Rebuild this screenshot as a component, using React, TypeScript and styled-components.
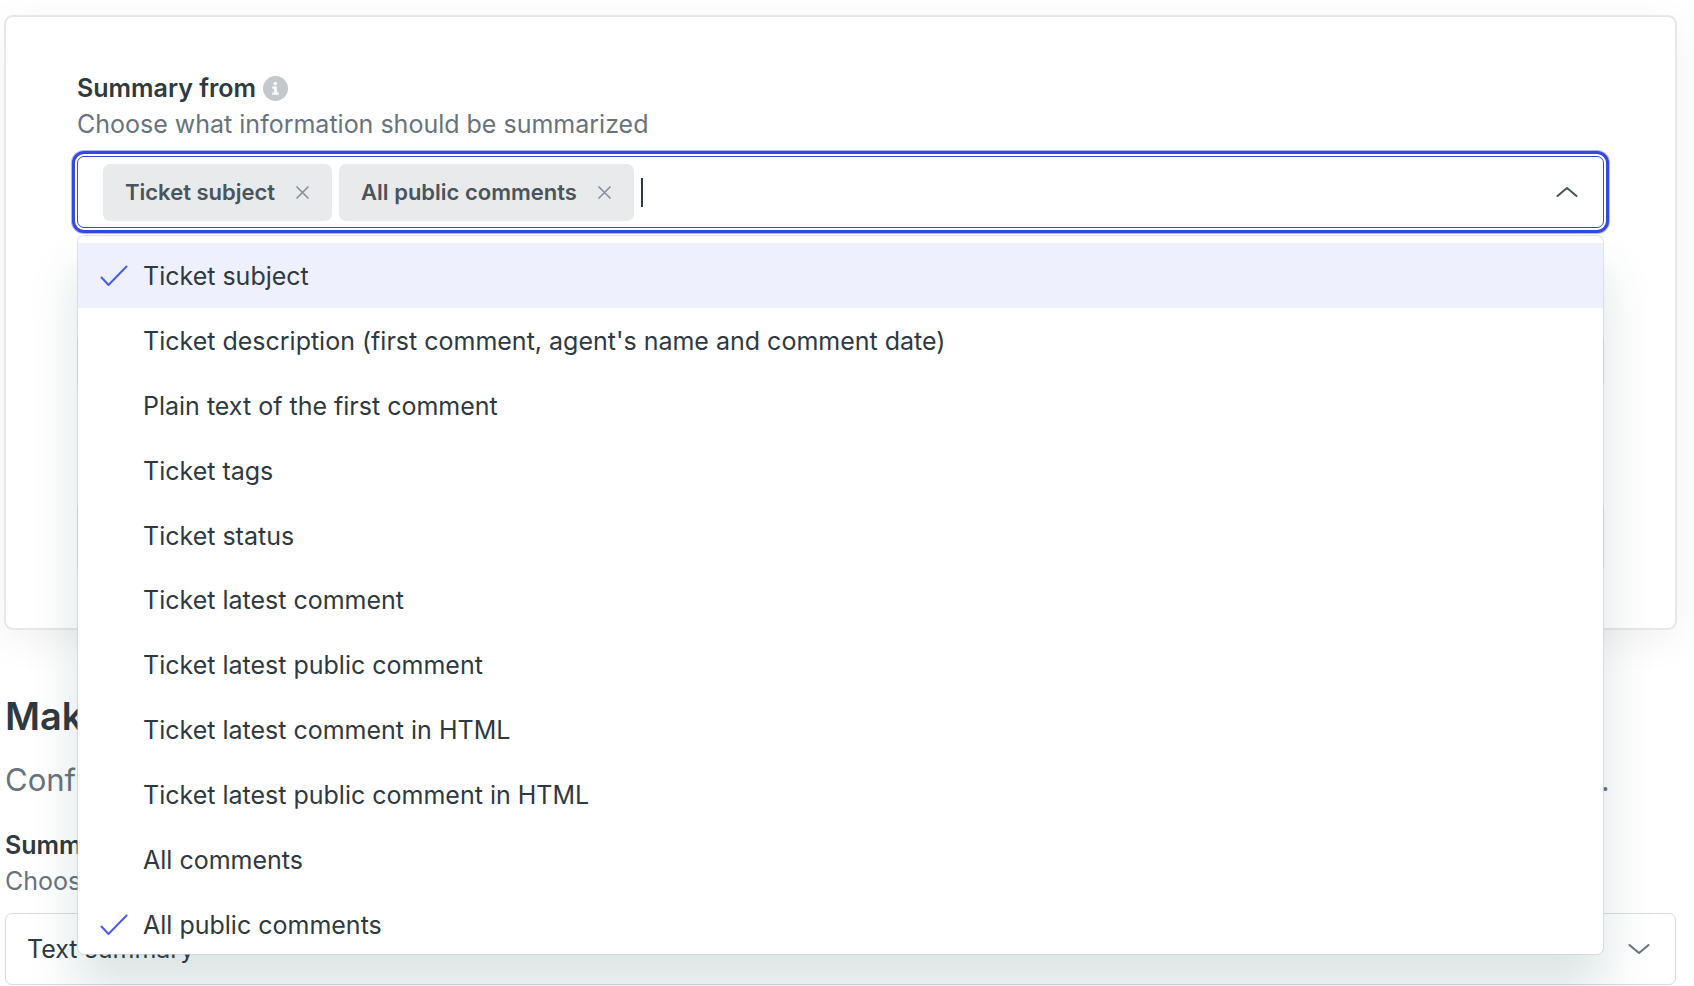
import React, { useState } from "react";
import styled, { createGlobalStyle } from "styled-components";

const GlobalStyle = createGlobalStyle`
  * { box-sizing: border-box; }
  html { overflow-x: hidden; }
  body {
    margin: 0;
    background: #fff;
    color: #2f3941;
    font-family: Inter, "Liberation Sans", sans-serif;
    font-size: 25px;
    line-height: 36px;
  }
  h2, p { margin: 0; }
  input, select, button { font: inherit; color: inherit; }
`;

const Page = styled.main`
  height: 100vh;
  overflow: hidden;
  padding: 15px 17px 0 4px;
`;

const Card = styled.section`
  padding: 53px 71px 55px;
  border: 2px solid #e6e7e7;
  border-radius: 9px;
  background: #fff;
  box-shadow: 0 10px 40px rgba(0, 0, 0, 0.06);
`;

const Field = styled.div<{ $gap?: number }>`
  position: relative;
  display: flex;
  flex-direction: column;
  margin-top: ${(p) => p.$gap ?? 0}px;
`;

const LabelRow = styled.div`
  display: flex;
  align-items: center;
  gap: 7px;
`;

const Label = styled.label`
  font-weight: 600;
`;

const InfoButton = styled.button`
  display: flex;
  padding: 0;
  border: 0;
  background: none;
`;

const Hint = styled.p`
  color: #68737d;
`;

const Combobox = styled.div`
  display: flex;
  align-items: center;
  height: 72px;
  margin-top: 14px;
  padding: 0 25px;
  border: 1px solid #3549e0;
  border-radius: 7px;
  background: #fff;
  box-shadow: 0 0 0 2px #fff, 0 0 0 5px #3549e0, 0 0 0 6px rgba(53, 73, 224, 0.4);
`;

const Chip = styled.span`
  display: flex;
  align-items: center;
  gap: 21px;
  height: 57px;
  margin-right: 7px;
  padding: 0 23px 0 22px;
  border-radius: 7px;
  background: #e9eaeb;
  color: #49545c;
  font-size: 22px;
  font-weight: 600;
`;

const ChipRemove = styled.button`
  display: flex;
  padding: 0;
  border: 0;
  background: none;
  color: #87929d;
`;

const Caret = styled.span`
  width: 2px;
  height: 29px;
  background: #2f3941;
`;

const SearchInput = styled.input`
  flex: 1;
  min-width: 0;
  padding: 0;
  border: 0;
  outline: 0;
  background: none;
  caret-color: transparent;
`;

const Menu = styled.div`
  position: absolute;
  z-index: 2;
  top: calc(100% + 7px);
  left: 0;
  right: 0;
  height: 720px;
  padding-top: 7px;
  overflow: hidden;
  border: 1px solid rgba(200, 208, 212, 0.6);
  border-radius: 7px;
  background: #fff;
  background-clip: padding-box;
  box-shadow: 0 36px 50px rgba(23, 73, 77, 0.15);
`;

const OptionList = styled.ul`
  display: grid;
  grid-auto-rows: 1fr;
  height: 713px;
  margin: 0;
  padding: 0;
  list-style: none;
`;

const Option = styled.li<{ $active: boolean }>`
  display: grid;
  grid-template-columns: 28px 1fr;
  column-gap: 15px;
  align-items: center;
  padding: 2px 22px 0;
  background: ${(p) => (p.$active ? "#eef0fd" : "transparent")};
`;

const OptionText = styled.span`
  grid-column: 2;
`;

const Section = styled.section`
  margin: 62px 1px 0;
`;

const Heading = styled.h2`
  font-size: 38px;
  font-weight: 600;
  line-height: 48px;
`;

const Lead = styled.p`
  margin: 18px 0 25px;
  color: #68737d;
  font-size: 31px;
  line-height: 44px;
  white-space: nowrap;
`;

const SelectBox = styled.div<{ $short?: boolean }>`
  display: grid;
  align-items: center;
  margin-top: 14px;
  height: ${(p) => (p.$short ? 56 : 72)}px;
  border: 1px solid #d8dcde;
  border-radius: 7px;
  background: #fff;

  > * { grid-area: 1 / 1; }
  > svg { justify-self: end; margin-right: 25px; pointer-events: none; }
`;

const Select = styled.select`
  width: 100%;
  height: 100%;
  padding: 0 21px;
  border: 0;
  outline: 0;
  appearance: none;
  background: none;
`;

const Chevron = ({ up = false }: { up?: boolean }) => (
  <svg width="22" height="12" viewBox="0 0 22 12" fill="none" stroke={up ? "#49545c" : "#68737d"} strokeWidth="2" strokeLinecap="round" strokeLinejoin="round" aria-hidden="true">
    <path d={up ? "M1.5 10 L11 2 L20.5 10" : "M1.5 2 L11 10 L20.5 2"} />
  </svg>
);

const Check = () => (
  <svg width="28" height="22" viewBox="0 0 28 22" fill="none" stroke="#4a5cf0" strokeWidth="2" strokeLinecap="round" strokeLinejoin="round" aria-hidden="true">
    <path d="M1.5 12.5 L8.5 20 L26.5 1.5" />
  </svg>
);

const Cross = () => (
  <svg width="13" height="13" viewBox="0 0 13 13" stroke="currentColor" strokeWidth="1.7" strokeLinecap="round" aria-hidden="true">
    <path d="M1 1 L12 12 M12 1 L1 12" />
  </svg>
);

const Info = () => (
  <svg width="25" height="25" viewBox="0 0 25 25" aria-hidden="true">
    <circle cx="12.5" cy="12.5" r="12.5" fill="#c2c8cc" />
    <circle cx="12.3" cy="7.6" r="1.8" fill="#fff" />
    <path d="M9.4 10.6 H13.8 V16.6 H15.8 V18.8 H9.2 V16.6 H11.2 V12.8 H9.4 Z" fill="#fff" />
  </svg>
);

const OPTIONS = [
  "Ticket subject",
  "Ticket description (first comment, agent's name and comment date)",
  "Plain text of the first comment",
  "Ticket tags",
  "Ticket status",
  "Ticket latest comment",
  "Ticket latest public comment",
  "Ticket latest comment in HTML",
  "Ticket latest public comment in HTML",
  "All comments",
  "All public comments",
];

export default function App() {
  const [selected, setSelected] = useState(["Ticket subject", "All public comments"]);
  const toggle = (name: string) =>
    setSelected((s) => (s.includes(name) ? s.filter((n) => n !== name) : [...s, name]));

  return (
    <>
      <GlobalStyle />
      <Page>
        <Card>
          <Field>
            <LabelRow>
              <Label htmlFor="source">Summary from</Label>
              <InfoButton type="button" aria-label="More information"><Info /></InfoButton>
            </LabelRow>
            <Hint>Choose what information should be summarized</Hint>
            <Combobox>
              {selected.map((name) => (
                <Chip key={name}>
                  {name}
                  <ChipRemove type="button" aria-label={`Remove ${name}`} onClick={() => toggle(name)}>
                    <Cross />
                  </ChipRemove>
                </Chip>
              ))}
              <Caret />
              <SearchInput id="source" role="combobox" aria-expanded="true" aria-controls="source-options" />
              <Chevron up />
            </Combobox>
            <Menu>
              <OptionList id="source-options" role="listbox" aria-multiselectable="true">
                {OPTIONS.map((name, i) => (
                  <Option key={name} role="option" aria-selected={selected.includes(name)} $active={i === 0} onClick={() => toggle(name)}>
                    {selected.includes(name) && <Check />}
                    <OptionText>{name}</OptionText>
                  </Option>
                ))}
              </OptionList>
            </Menu>
          </Field>
          <Field $gap={91}>
            <SelectBox $short><Select aria-label="Language" /></SelectBox>
          </Field>
          <Field $gap={98}>
            <SelectBox><Select aria-label="Tone" /></SelectBox>
          </Field>
        </Card>

        <Section>
          <Heading>Make summary</Heading>
          <Lead>Configure how the summary should be made and which format should be kept for all of the ticket information.</Lead>
          <Field>
            <Label htmlFor="type">Summary type</Label>
            <Hint>Choose type of the summary</Hint>
            <SelectBox>
              <Select id="type"><option>Text summary</option></Select>
              <Chevron />
            </SelectBox>
          </Field>
        </Section>
      </Page>
    </>
  );
}
